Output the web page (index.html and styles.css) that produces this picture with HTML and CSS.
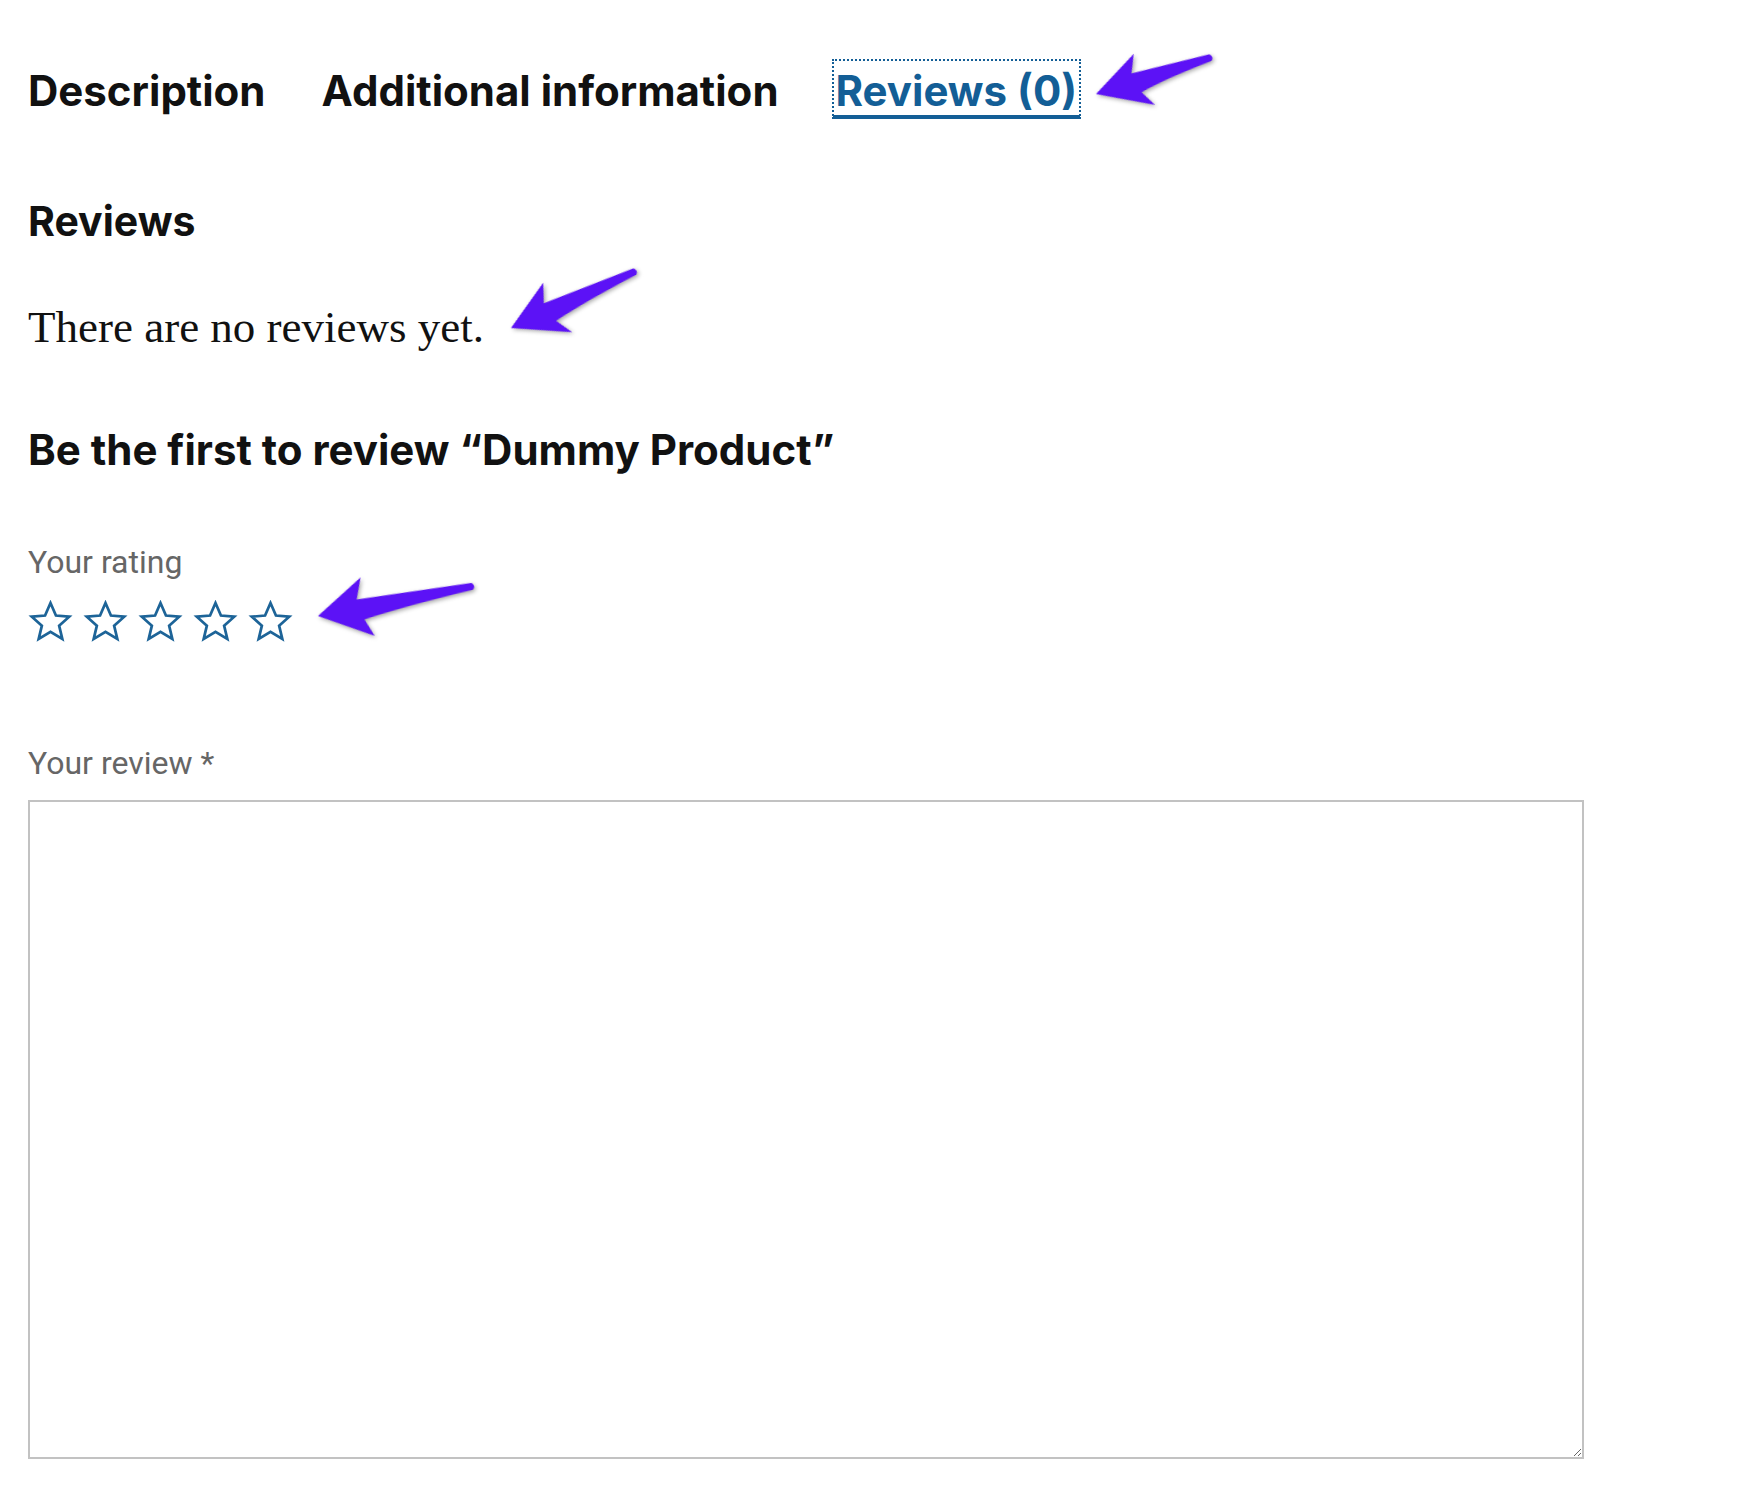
FILE: index.html
```
<!DOCTYPE html>
<html lang="en">
<head>
<meta charset="utf-8">
<title>Reviews</title>
<link rel="stylesheet" href="styles.css">
</head>
<body>
<div class="page">
  <nav class="tabs">
    <a class="tab">Description</a>
    <a class="tab">Additional information</a>
    <a class="tab tab-active">Reviews (0)</a>
  </nav>

  <section class="reviews">
    <h2 class="reviews-title">Reviews</h2>
    <p class="no-reviews">There are no reviews yet.</p>
    <h3 class="reply-title">Be the first to review “Dummy Product”</h3>

    <form class="review-form">
      <label class="field-label rating-label">Your rating</label>
      <div class="stars">
        <svg class="star" viewBox="0 0 24 24"><polygon points="12,1.6 14.9,8.3 22,8.9 16.6,13.7 18.3,20.8 12,17 5.7,20.8 7.4,13.7 2,8.9 9.1,8.3"/></svg>
        <svg class="star" viewBox="0 0 24 24"><polygon points="12,1.6 14.9,8.3 22,8.9 16.6,13.7 18.3,20.8 12,17 5.7,20.8 7.4,13.7 2,8.9 9.1,8.3"/></svg>
        <svg class="star" viewBox="0 0 24 24"><polygon points="12,1.6 14.9,8.3 22,8.9 16.6,13.7 18.3,20.8 12,17 5.7,20.8 7.4,13.7 2,8.9 9.1,8.3"/></svg>
        <svg class="star" viewBox="0 0 24 24"><polygon points="12,1.6 14.9,8.3 22,8.9 16.6,13.7 18.3,20.8 12,17 5.7,20.8 7.4,13.7 2,8.9 9.1,8.3"/></svg>
        <svg class="star" viewBox="0 0 24 24"><polygon points="12,1.6 14.9,8.3 22,8.9 16.6,13.7 18.3,20.8 12,17 5.7,20.8 7.4,13.7 2,8.9 9.1,8.3"/></svg>
      </div>
      <label class="field-label review-label" for="comment">Your review *</label>
      <textarea id="comment" class="review-text"></textarea>
    </form>
  </section>

  <svg class="annotations" width="1762" height="1492" viewBox="0 0 1762 1492">
    <g transform="translate(1096 94) rotate(-17.4)">
      <path d="M0 0 L48 -27 L40 -9 L120 -4 Q124 0 120 3 Q70 6 44 12 L53 28 Z"/>
    </g>
    <g transform="translate(511 328) rotate(-24.3)">
      <path d="M0 0 L48 -28 L40 -9 L136 -4 Q140 0 136 3 Q80 6 44 12 L54 29 Z"/>
    </g>
    <g transform="translate(318 616) rotate(-10.7)">
      <path d="M0 0 L49 -30 L41 -9 L157 -4 Q161 0 157 3 Q90 6 45 12 L52 30 Z"/>
    </g>
  </svg>
</div>
</body>
</html>
```

FILE: styles.css
```
html, body {
  margin: 0;
  padding: 0;
  background: #ffffff;
}

body {
  font-family: Inter, "Liberation Sans", sans-serif;
  color: #111111;
}

.page {
  position: relative;
  width: 1762px;
  min-height: 1492px;
  padding: 0 0 0 28px;
  box-sizing: border-box;
}

.tabs {
  display: flex;
  align-items: flex-start;
  gap: 56px;
  padding-top: 59px;
}

.tab {
  font-size: 42px;
  font-weight: 700;
  line-height: 48px;
  color: #111111;
  text-decoration: none;
  padding-top: 8px;
}

.tab-active {
  margin-left: -3px;
  color: #135e96;
  padding: 6px 2px 0 2px;
  border: 2px dotted #135e96;
  border-bottom: 4px solid #135e96;
}

.reviews-title {
  margin: 78px 0 0 0;
  font-size: 41px;
  line-height: 49px;
  font-weight: 700;
}

.no-reviews {
  margin: 55px 0 0 0;
  font-family: "Liberation Serif", "DejaVu Serif", serif;
  font-size: 45px;
  line-height: 52px;
  color: #111111;
}

.reply-title {
  margin: 72px 0 0 0;
  font-size: 42px;
  line-height: 50px;
  font-weight: 700;
}

.review-form {
  display: flex;
  flex-direction: column;
  align-items: flex-start;
}

.field-label {
  font-family: Roboto, "Liberation Sans", sans-serif;
  font-size: 32px;
  line-height: 38px;
  color: #666666;
}

.rating-label {
  margin-top: 68px;
}

.stars {
  display: flex;
  gap: 10px;
  margin-top: 19px;
}

.star {
  width: 45px;
  height: 45px;
  display: block;
}

.star polygon {
  fill: none;
  stroke: #1d6498;
  stroke-width: 1.45;
  stroke-linejoin: miter;
}

.review-label {
  margin-top: 99px;
}

.review-text {
  margin-top: 18px;
  width: 1556px;
  height: 659px;
  box-sizing: border-box;
  border: 2px solid #c2c2c2;
  border-radius: 0;
  padding: 10px;
  font-family: Roboto, sans-serif;
  font-size: 24px;
  background: #ffffff;
}

.annotations {
  position: absolute;
  left: 0;
  top: 0;
  pointer-events: none;
  overflow: visible;
}

.annotations path {
  fill: #5c12f6;
  filter: drop-shadow(1px 2px 2px rgba(0, 0, 0, 0.35));
}
```
